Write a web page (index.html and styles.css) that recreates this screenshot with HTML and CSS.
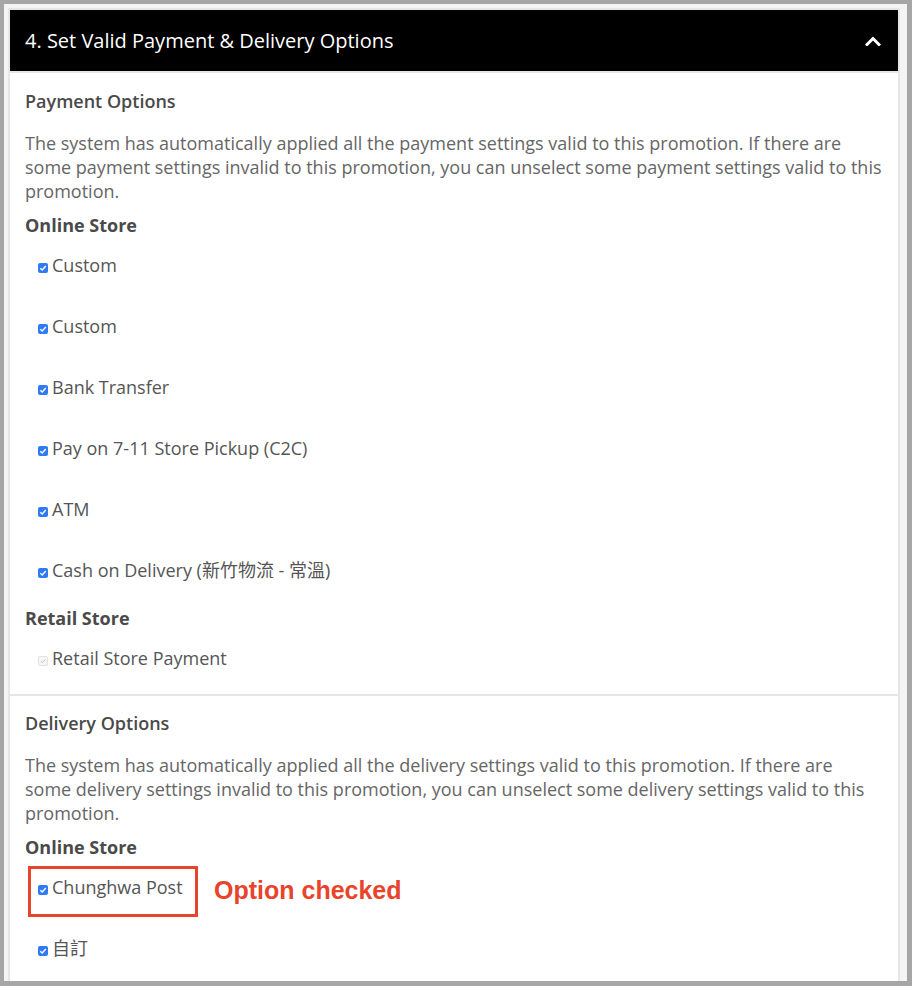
FILE: index.html
```html
<!DOCTYPE html>
<html lang="en">
<head>
<meta charset="utf-8">
<title>Set Valid Payment &amp; Delivery Options</title>
<link rel="stylesheet" href="styles.css">
</head>
<body>
<div class="frame">
  <div class="panel">
    <div class="panel-header">
      <span class="panel-title">4. Set Valid Payment &amp; Delivery Options</span>
      <svg class="chevron" width="16" height="10" viewBox="0 0 16 10"><polyline points="2,8.5 8,2.5 14,8.5" fill="none" stroke="#fff" stroke-width="3" stroke-linecap="square"/></svg>
    </div>

    <section class="section">
      <h3 class="section-title">Payment Options</h3>
      <p class="desc">The system has automatically applied all the payment settings valid to this promotion. If there are some payment settings invalid to this promotion, you can unselect some payment settings valid to this promotion.</p>
      <h4 class="group-title">Online Store</h4>
      <ul class="options">
        <li class="option"><span class="cb"><svg viewBox="0 0 10 10"><polyline points="2.3,5.2 4.2,7 7.8,3" fill="none" stroke="#fff" stroke-width="1.4"/></svg></span>Custom</li>
        <li class="option"><span class="cb"><svg viewBox="0 0 10 10"><polyline points="2.3,5.2 4.2,7 7.8,3" fill="none" stroke="#fff" stroke-width="1.4"/></svg></span>Custom</li>
        <li class="option"><span class="cb"><svg viewBox="0 0 10 10"><polyline points="2.3,5.2 4.2,7 7.8,3" fill="none" stroke="#fff" stroke-width="1.4"/></svg></span>Bank Transfer</li>
        <li class="option"><span class="cb"><svg viewBox="0 0 10 10"><polyline points="2.3,5.2 4.2,7 7.8,3" fill="none" stroke="#fff" stroke-width="1.4"/></svg></span>Pay on 7-11 Store Pickup (C2C)</li>
        <li class="option"><span class="cb"><svg viewBox="0 0 10 10"><polyline points="2.3,5.2 4.2,7 7.8,3" fill="none" stroke="#fff" stroke-width="1.4"/></svg></span>ATM</li>
        <li class="option"><span class="cb"><svg viewBox="0 0 10 10"><polyline points="2.3,5.2 4.2,7 7.8,3" fill="none" stroke="#fff" stroke-width="1.4"/></svg></span>Cash on Delivery (新竹物流 - 常溫)</li>
      </ul>
      <h4 class="group-title group-gap">Retail Store</h4>
      <ul class="options">
        <li class="option"><span class="cb cb-disabled"><svg viewBox="0 0 10 10"><polyline points="2.3,5.2 4.2,7 7.8,3" fill="none" stroke="#b8b8b8" stroke-width="1.1"/></svg></span>Retail Store Payment</li>
      </ul>
    </section>

    <section class="section section-delivery">
      <h3 class="section-title">Delivery Options</h3>
      <p class="desc">The system has automatically applied all the delivery settings valid to this promotion. If there are some delivery settings invalid to this promotion, you can unselect some delivery settings valid to this promotion.</p>
      <h4 class="group-title">Online Store</h4>
      <ul class="options">
        <li class="option option-marked"><span class="cb"><svg viewBox="0 0 10 10"><polyline points="2.3,5.2 4.2,7 7.8,3" fill="none" stroke="#fff" stroke-width="1.4"/></svg></span>Chunghwa Post<span class="mark-box"></span><span class="mark-label">Option checked</span></li>
        <li class="option"><span class="cb"><svg viewBox="0 0 10 10"><polyline points="2.3,5.2 4.2,7 7.8,3" fill="none" stroke="#fff" stroke-width="1.4"/></svg></span>自訂</li>
      </ul>
    </section>
  </div>
</div>
</body>
</html>
```
FILE: styles.css
```css
* { box-sizing: border-box; }

html, body {
  margin: 0;
  height: 986px;
  overflow: hidden;
}

body {
  background: #a6a6a6;
  padding: 4px 5px 0 4px;
  font-family: "Open Sans", "Noto Sans CJK TC", sans-serif;
  color: #555;
}

.frame {
  background: #f4f4f4;
  height: 977px;
  padding: 4px 7px 0 4px;
  overflow: hidden;
}

.panel {
  background: #fff;
  border: 2px solid #e6e6e6;
  border-bottom: none;
  height: 100%;
}

.panel-header {
  background: #000;
  height: 61px;
  padding: 0 17px 0 15px;
  display: flex;
  align-items: center;
  justify-content: space-between;
  border-bottom: 2px solid #e6e6e6;
  box-sizing: content-box;
}

.panel-title {
  color: #fff;
  font-size: 20px;
  font-weight: 500;
}

.chevron { display: block; margin-top: 1px; }

.section {
  padding: 16px 10px 3px 15px;
}

.section-delivery {
  border-top: 2px solid #e6e6e6;
  padding-top: 15px;
}

.section-title {
  margin: 0;
  font-size: 18px;
  line-height: 24px;
  font-weight: 600;
  color: #4a4a4a;
}

.desc {
  margin: 18px 0 0;
  max-width: 857px;
  font-size: 18px;
  line-height: 24px;
  color: #666;
}

.group-title {
  margin: 10px 0 0;
  font-size: 18px;
  line-height: 24px;
  font-weight: 700;
  color: #4a4a4a;
}

.group-gap { margin-top: 3px; }

.options {
  list-style: none;
  margin: 0;
  padding: 0;
}

.option {
  display: flex;
  align-items: flex-end;
  padding: 16px 0 21px 13px;
  height: 61px;
  font-size: 18px;
  line-height: 24px;
  color: #555;
}

.cb {
  width: 10px;
  height: 10px;
  border-radius: 2px;
  background: #2f7bf5;
  margin: 0 4px 4px 0;
  flex: none;
  display: block;
}

.cb svg { display: block; width: 10px; height: 10px; }

.cb-disabled {
  background: #f7f7f7;
  border: 1px solid #e2e2e2;
}

.cb-disabled svg { width: 8px; height: 8px; }

.option-marked { position: relative; }

.mark-box {
  position: absolute;
  left: 3px;
  top: 7px;
  width: 170px;
  height: 51px;
  border: 3px solid #e8432b;
}

.mark-label {
  position: absolute;
  left: 189px;
  top: 17px;
  font-family: "Liberation Sans", Arial, sans-serif;
  font-weight: 700;
  font-size: 25px;
  line-height: 28px;
  color: #e8432b;
}
```
